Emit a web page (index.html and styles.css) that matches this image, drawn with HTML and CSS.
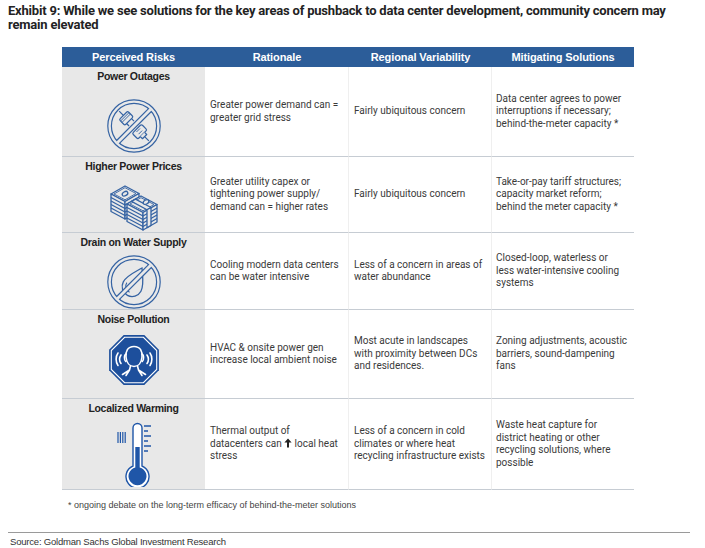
FILE: index.html
```html
<!DOCTYPE html>
<html lang="en">
<head>
<meta charset="utf-8">
<title>Exhibit 9</title>
<link rel="stylesheet" href="styles.css">
</head>
<body>
<h1 class="title">Exhibit 9: While we see solutions for the key areas of pushback to data center development, community concern may<br>remain elevated</h1>

<div class="table">
  <div class="head">Perceived Risks</div>
  <div class="head">Rationale</div>
  <div class="head">Regional Variability</div>
  <div class="head">Mitigating Solutions</div>

  <div class="risk">
    <div class="risk-name">Power Outages</div>
    <svg class="icon icon-plug" width="54" height="54" viewBox="0 0 54 54">
      <g fill="none" stroke-linecap="butt">
        <g transform="translate(27 27) rotate(45)" stroke="#3563a3" stroke-width="1.2" fill="#e8e8e8" stroke-linejoin="round">
          <path d="M-21 0 H-15"/>
          <rect x="-15" y="-6" width="8" height="12" rx="1.5"/>
          <path d="M-7 -3.5 H-3.5 M-7 3.5 H-3.5"/>
          <path d="M-13 -6 V6 M-11 -6 V6" stroke-width="0.9"/>
          <rect x="4" y="-6.5" width="8" height="13" rx="1.5"/>
          <path d="M12 -3 h3 v6 h-3 M15 0 H21"/>
          <path d="M6 -2.5 v5 M9 -2.5 v5" stroke-width="0.9"/>
        </g>
        <circle cx="27" cy="27" r="24.4" stroke="#3563a3" stroke-width="4.8"/>
        <path d="M10.3 43.7 L43.7 10.3" stroke="#3563a3" stroke-width="5.2"/>
        <circle cx="27" cy="27" r="24.4" stroke="#e8e8e8" stroke-width="2.4"/>
        <path d="M10.3 43.7 L43.7 10.3" stroke="#e8e8e8" stroke-width="2.8"/>
      </g>
    </svg>
  </div>
  <div class="cell"><div>Greater power demand can =<br>greater grid stress</div></div>
  <div class="cell"><div>Fairly ubiquitous concern</div></div>
  <div class="cell cell-last"><div>Data center agrees to power<br>interruptions if necessary;<br>behind-the-meter capacity *</div></div>

  <div class="risk">
    <div class="risk-name">Higher Power Prices</div>
    <svg class="icon icon-money" width="50" height="48" viewBox="0 0 50 48">
      <g stroke="#3563a3" stroke-width="1.3" fill="#e8e8e8" stroke-linejoin="round">
        <path d="M2 11 L16 3 L30 10.5 L16 18.5 Z"/>
        <path d="M2 11 L16 18.5 L16 36 L2 28.5 Z"/>
        <path d="M16 18.5 L30 10.5 L30 28 L16 36 Z"/>
        <path d="M2 14.5 L16 22 L30 14 M2 18 L16 25.5 L30 17.5 M2 21.5 L16 29 L30 21 M2 25 L16 32.5 L30 24.5" fill="none"/>
        <path d="M5 11 L16 4.7 L27 10.5 L16 16.8 Z" fill="none" stroke-width="0.9"/>
        <ellipse cx="16" cy="10.7" rx="3" ry="2" transform="rotate(-30 16 10.7)"/>
        <path d="M18 21 L32 13 L48 21.5 L34 29.5 Z"/>
        <path d="M18 21 L34 29.5 L34 47 L18 38.5 Z"/>
        <path d="M34 29.5 L48 21.5 L48 39 L34 47 Z"/>
        <path d="M18 24.5 L34 33 L48 25 M18 28 L34 36.5 L48 28.5 M18 31.5 L34 40 L48 32 M18 35 L34 43.5 L48 35.5" fill="none"/>
        <path d="M21 21 L32 14.7 L45 21.5 L34 27.8 Z" fill="none" stroke-width="0.9"/>
        <path d="M22.5 18.4 L26.5 16.1 L42 24.5 L38 26.8 Z"/>
        <path d="M38 26.8 L42 24.5 L42 42.4 L38 44.7 Z"/>
        <ellipse cx="37" cy="19" rx="3" ry="2" transform="rotate(-30 37 19)"/>
      </g>
    </svg>
  </div>
  <div class="cell"><div>Greater utility capex or<br>tightening power supply/<br>demand can = higher rates</div></div>
  <div class="cell"><div>Fairly ubiquitous concern</div></div>
  <div class="cell cell-last"><div>Take-or-pay tariff structures;<br>capacity market reform;<br>behind the meter capacity *</div></div>

  <div class="risk">
    <div class="risk-name">Drain on Water Supply</div>
    <svg class="icon icon-water" width="54" height="54" viewBox="0 0 54 54">
      <g fill="none">
        <g transform="translate(27 28) rotate(28)" stroke="#3563a3" stroke-width="1.3" fill="#e8e8e8">
          <path d="M0 -17 C5 -9 10 -3 10 4 A10 10 0 0 1 -10 4 C-10 -3 -5 -9 0 -17 Z"/>
          <path d="M-6.5 3 A6.5 6.5 0 0 0 0.5 10.3" fill="none" stroke-width="1"/>
        </g>
        <circle cx="27" cy="27" r="24.4" stroke="#3563a3" stroke-width="4.8"/>
        <path d="M10.3 43.7 L43.7 10.3" stroke="#3563a3" stroke-width="5.2"/>
        <circle cx="27" cy="27" r="24.4" stroke="#e8e8e8" stroke-width="2.4"/>
        <path d="M10.3 43.7 L43.7 10.3" stroke="#e8e8e8" stroke-width="2.8"/>
      </g>
    </svg>
  </div>
  <div class="cell"><div>Cooling modern data centers<br>can be water intensive</div></div>
  <div class="cell"><div>Less of a concern in areas of<br>water abundance</div></div>
  <div class="cell cell-last"><div>Closed-loop, waterless or<br>less water-intensive cooling<br>systems</div></div>

  <div class="risk">
    <div class="risk-name">Noise Pollution</div>
    <svg class="icon icon-noise" width="54" height="54" viewBox="0 0 54 54">
      <polygon points="16.7,2.1 37.3,2.1 51.9,16.7 51.9,37.3 37.3,51.9 16.7,51.9 2.1,37.3 2.1,16.7" fill="#1d4f9c"/>
      <polygon points="17.6,4.3 36.4,4.3 49.7,17.6 49.7,36.4 36.4,49.7 17.6,49.7 4.3,36.4 4.3,17.6" fill="none" stroke="#fff" stroke-width="1.1"/>
      <g fill="none" stroke="#fff" stroke-width="1.6" stroke-linecap="round" stroke-linejoin="round">
        <path d="M27 13.5 C20.5 13.5 18.5 18.5 19 24 C19.5 29.5 22.5 33.5 27 33.5 C31.5 33.5 34.5 29.5 35 24 C35.5 18.5 33.5 13.5 27 13.5 Z"/>
        <path d="M19.2 21 C17 21.5 16.8 27 18.8 28.5 M34.8 21 C37 21.5 37.2 27 35.2 28.5"/>
        <path d="M23.5 33 L22.5 37 L15.5 41.5 M22.5 37 L19 42.5 M30.5 33 L31.5 37 L38.5 41.5 M31.5 37 L35 42.5"/>
        <path d="M14 22 C12.3 24.5 12.3 28 14 30.5 M11 20 C8.5 23.5 8.5 29 11 32.5"/>
        <path d="M40 22 C41.7 24.5 41.7 28 40 30.5 M43 20 C45.5 23.5 45.5 29 43 32.5"/>
      </g>
    </svg>
  </div>
  <div class="cell"><div>HVAC &amp; onsite power gen<br>increase local ambient noise</div></div>
  <div class="cell"><div>Most acute in landscapes<br>with proximity between DCs<br>and residences.</div></div>
  <div class="cell cell-last"><div>Zoning adjustments, acoustic<br>barriers, sound-dampening<br>fans</div></div>

  <div class="risk">
    <div class="risk-name">Localized Warming</div>
    <svg class="icon icon-thermo" width="40" height="66" viewBox="0 0 40 66">
      <g stroke="#1f56a8" fill="none" stroke-width="1.4">
        <path d="M5 11 V22 M7.4 11 V22 M9.8 11 V22 M12.2 11 V22" stroke-width="1.2"/>
        <path d="M31 5 H38 M31 10 H35 M31 15 H38 M31 20 H35 M31 25 H38 M31 30 H35" stroke-width="1.3"/>
        <path d="M20 45 V7 A4.5 4.5 0 0 1 29 7 V45 A11.5 11.5 0 1 1 20 45 Z" fill="#fff"/>
        <path d="M22.3 46.5 V26 H26.7 V46.5 A9 9 0 1 1 22.3 46.5 Z" fill="#1f56a8" stroke="none"/>
      </g>
    </svg>
  </div>
  <div class="cell"><div>Thermal output of<br>datacenters can <svg class="arrow" width="8" height="10" viewBox="0 0 8 10"><path d="M4 0.5 L7.6 4.6 L5 4.6 L5 9.5 L3 9.5 L3 4.6 L0.4 4.6 Z" fill="#222"/></svg> local heat<br>stress</div></div>
  <div class="cell"><div>Less of a concern in cold<br>climates or where heat<br>recycling infrastructure exists</div></div>
  <div class="cell cell-last"><div>Waste heat capture for<br>district heating or other<br>recycling solutions, where<br>possible</div></div>
</div>

<p class="note">* ongoing debate on the long-term efficacy of behind-the-meter solutions</p>

<div class="rule"></div>
<p class="source">Source: Goldman Sachs Global Investment Research</p>
</body>
</html>
```

FILE: styles.css
```css
body {
  margin: 0;
  background: #ffffff;
  font-family: Roboto, "Liberation Sans", sans-serif;
  color: #333333;
}

.title {
  margin: 4px 0 0 8px;
  font-family: Roboto, "Liberation Sans", sans-serif;
  font-weight: bold;
  font-size: 13px;
  line-height: 14px;
  letter-spacing: -0.2px;
  color: #232323;
  white-space: nowrap;
}

.table {
  margin: 15px 0 0 62px;
  display: grid;
  grid-template-columns: 143px 144px 143px 142px;
  grid-template-rows: 20px 90px 76px 77px 89px 91px;
  width: 572px;
}

.head {
  background: #2c5d99;
  color: #ffffff;
  font-family: "Liberation Sans", Roboto, sans-serif;
  font-weight: bold;
  font-size: 11px;
  letter-spacing: -0.1px;
  display: flex;
  align-items: center;
  justify-content: center;
}

.risk {
  background: #e8e8e8;
  border-bottom: 1px solid #c6ccd3;
  display: flex;
  flex-direction: column;
  align-items: center;
  padding-top: 3px;
  box-sizing: border-box;
}

.risk-name {
  font-family: "Liberation Sans", Roboto, sans-serif;
  font-weight: bold;
  font-size: 10.5px;
  line-height: 12px;
  letter-spacing: -0.3px;
  color: #222222;
}

.icon {
  display: block;
}

.icon-plug { margin-top: 17px; }
.icon-money { margin-top: 11px; }
.icon-water { margin-top: 7px; }
.icon-noise { margin-top: 8px; }
.icon-thermo { margin-top: 7px; margin-right: 2px; }

.cell {
  border-bottom: 1px solid #c6ccd3;
  border-right: 1px solid #efefef;
  box-sizing: border-box;
  display: flex;
  align-items: center;
  padding: 0 3px 0 5px;
  font-size: 10px;
  line-height: 12.5px;
  color: #3a3a3a;
  white-space: nowrap;
}

.cell-last {
  border-right: none;
  padding-left: 4px;
}

.arrow {
  vertical-align: -1px;
}

.note {
  margin: 9px 0 0 68px;
  font-family: "Liberation Sans", Roboto, sans-serif;
  font-size: 9px;
  line-height: 12px;
  color: #444444;
}

.rule {
  margin: 21px 15px 0 8px;
  border-top: 1px solid #9a9a9a;
}

.source {
  margin: 3px 0 0 10px;
  font-family: "Liberation Sans", Roboto, sans-serif;
  font-size: 9.5px;
  line-height: 12px;
  letter-spacing: -0.2px;
  color: #333333;
}
```
